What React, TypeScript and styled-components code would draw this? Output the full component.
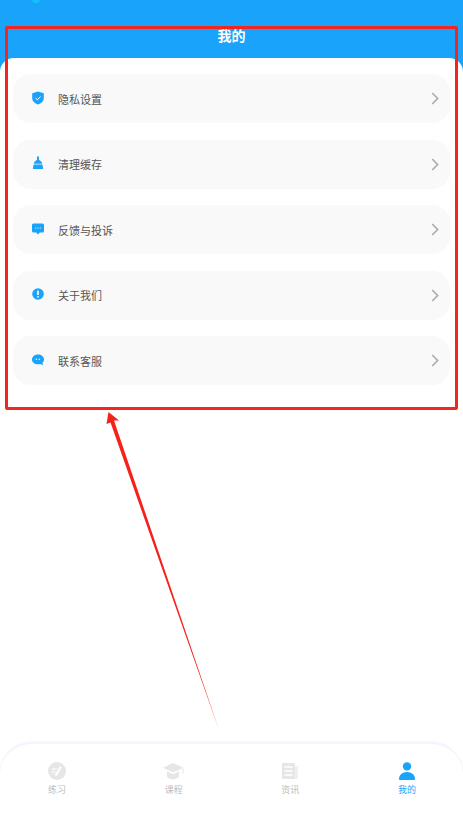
import React from "react";
import styled, { createGlobalStyle } from "styled-components";

const GlobalStyle = createGlobalStyle`
  html, body {
    margin: 0;
    padding: 0;
    background: #fff;
  }
  body {
    font-family: "Noto Sans CJK SC", "Liberation Sans", sans-serif;
  }
`;

const Page = styled.div`
  position: relative;
  width: 463px;
  height: 815px;
  overflow: hidden;
  display: flex;
  flex-direction: column;
  background: linear-gradient(#1aa3fb 0, #1aa3fb 80px, #fff 80px);
`;

const Header = styled.header`
  height: 58px;
  flex-shrink: 0;
  position: relative;
  display: flex;
  justify-content: center;
  padding-top: 25px;
  box-sizing: border-box;
`;

const Title = styled.h1`
  margin: 0;
  font-size: 14px;
  line-height: 20px;
  font-weight: 700;
  color: #fff;
`;

const StatusDot = styled.span`
  position: absolute;
  left: 32px;
  top: -5px;
  width: 8px;
  height: 8px;
  border-radius: 50%;
  background: #12c2ff;
`;

const Content = styled.main`
  flex: 1;
  background: #fff;
  border-radius: 14px 14px 0 0;
  padding: 16px 13px 0 13px;
  display: flex;
  flex-direction: column;
  gap: 16.6px;
`;

const Row = styled.div`
  height: 49px;
  border-radius: 18px;
  background: #f9f9f9;
  display: flex;
  align-items: center;
  padding: 0 11px 0 18px;
`;

const RowIcon = styled.span`
  width: 14px;
  height: 14px;
  display: flex;
  margin-right: 13px;
  color: #1aa3fb;
  transform: translateY(-1px);
`;

const RowLabel = styled.span`
  flex: 1;
  font-size: 11px;
  line-height: 16px;
  color: #555;
  transform: translateY(-0.5px);
`;

const Chevron = styled.svg`
  width: 8px;
  height: 13px;
  fill: none;
  stroke: #adadad;
  stroke-width: 1.7;
`;

const TabBar = styled.nav`
  height: 73px;
  flex-shrink: 0;
  box-sizing: border-box;
  background: #fff;
  border-top: 2px solid #f3f5fd;
  border-radius: 32px 32px 0 0;
  box-shadow: 0 0 0 1px #f7f8fe;
  overflow: hidden;
  padding-top: 18px;
`;

const TabGrid = styled.div`
  display: grid;
  grid-template-columns: repeat(4, 116.7px);
  margin-left: -1.4px;
`;

const Tab = styled.div<{ $active?: boolean }>`
  display: flex;
  flex-direction: column;
  align-items: center;
  gap: 3px;
  color: ${(p) => (p.$active ? "#1aa3fb" : "#bdbdbd")};
`;

const TabIcon = styled.svg<{ $active?: boolean; $wide?: boolean }>`
  width: ${(p) => (p.$wide ? "21px" : "18px")};
  height: 18px;
  color: ${(p) => (p.$active ? "#1aa3fb" : "#e6e6e6")};
`;

const TabLabel = styled.span`
  font-size: 9px;
  line-height: 14px;
`;

const Highlight = styled.div`
  position: absolute;
  left: 5px;
  top: 26px;
  width: 453px;
  height: 384px;
  box-sizing: border-box;
  border: 3px solid #f3261f;
  border-radius: 2px;
  pointer-events: none;
`;

const Arrow = styled.svg`
  position: absolute;
  left: 0;
  top: 0;
  width: 463px;
  height: 815px;
  pointer-events: none;
`;

const ShieldIcon = () => (
  <svg viewBox="0 0 14 14" width="14" height="14">
    <path d="M7 .6 12.8 2.2V7c0 3.2-2.5 5.4-5.8 6.6C3.700 12.400 1.200 10.200 1.200 7V2.200Z" fill="currentColor" />
    <path d="M4.600 7.100 6.400 8.800 9.500 5.500" fill="none" stroke="#fff" strokeWidth="1" />
  </svg>
);

const BroomIcon = () => (
  <svg viewBox="0 0 14 14" width="14" height="14">
    <path d="M6 .5h2v3.300l2.700 2.200.5 1.800H2.800l.5-1.800L6 3.800Z" fill="currentColor" />
    <path d="M2.600 8.600h8.800l.8 4.400H1.800Z" fill="currentColor" />
  </svg>
);

const FeedbackIcon = () => (
  <svg viewBox="0 0 14 14" width="14" height="14">
    <path d="M2.500 1.500h9A1.500 1.500 0 0 1 13 3v6a1.500 1.500 0 0 1-1.500 1.500H8.800L7 12.500 5.200 10.500H2.500A1.500 1.500 0 0 1 1 9V3a1.500 1.500 0 0 1 1.500-1.500Z" fill="currentColor" />
    <circle cx="4.700" cy="6" r=".6" fill="#fff" />
    <circle cx="7" cy="6" r=".6" fill="#fff" />
    <circle cx="9.300" cy="6" r=".6" fill="#fff" />
  </svg>
);

const InfoIcon = () => (
  <svg viewBox="0 0 14 14" width="14" height="14">
    <circle cx="7" cy="7" r="5.800" fill="currentColor" />
    <rect x="6.200" y="3.400" width="1.600" height="4.600" rx=".6" fill="#fff" />
    <circle cx="7" cy="9.800" r=".9" fill="#fff" />
  </svg>
);

const ChatIcon = () => (
  <svg viewBox="0 0 14 14" width="14" height="14">
    <path d="M7 1.500c3.300 0 6 2.100 6 4.900 0 1.300-.6 2.500-1.600 3.400l.7 2.400-3-1.300c-.7.200-1.400.3-2.100.3-3.300 0-6-2.100-6-4.800S3.700 1.500 7 1.500Z" fill="currentColor" />
    <circle cx="5.300" cy="6.300" r=".7" fill="#fff" />
    <circle cx="8.200" cy="6.300" r=".7" fill="#fff" />
  </svg>
);

const items = [
  { label: "隐私设置", icon: <ShieldIcon /> },
  { label: "清理缓存", icon: <BroomIcon /> },
  { label: "反馈与投诉", icon: <FeedbackIcon /> },
  { label: "关于我们", icon: <InfoIcon /> },
  { label: "联系客服", icon: <ChatIcon /> },
];

function App() {
  return (
    <Page>
      <GlobalStyle />
      <Header>
        <StatusDot />
        <Title>我的</Title>
      </Header>
      <Content>
        {items.map((item) => (
          <Row key={item.label}>
            <RowIcon>{item.icon}</RowIcon>
            <RowLabel>{item.label}</RowLabel>
            <Chevron viewBox="0 0 8 13">
              <path d="M1.200 1 6.600 6.500 1.200 12" />
            </Chevron>
          </Row>
        ))}
      </Content>
      <TabBar>
        <TabGrid>
          <Tab>
            <TabIcon viewBox="0 0 18 18">
              <circle cx="9" cy="9" r="9" fill="currentColor" />
              <path d="M8 13 12.500 5.500" stroke="#fff" strokeWidth="2.200" strokeLinecap="round" />
              <path d="M4 7h4.500M4 10h3" stroke="#fff" strokeWidth="1.100" strokeLinecap="round" />
            </TabIcon>
            <TabLabel>练习</TabLabel>
          </Tab>
          <Tab>
            <TabIcon $wide viewBox="0 0 21 18">
              <path d="M10 1 20.500 5.800 10 10.500 0 5.800Z" fill="currentColor" />
              <path d="M4 9.500v4.500c0 1.800 2.700 3.300 6 3.300s6-1.500 6-3.300V9.500l-6 2.800Z" fill="currentColor" />
              <path d="M20 6.500v5" stroke="currentColor" strokeWidth="1" />
            </TabIcon>
            <TabLabel>课程</TabLabel>
          </Tab>
          <Tab>
            <TabIcon viewBox="0 0 18 18">
              <rect x="1" y="1" width="13" height="16" fill="currentColor" />
              <path d="M14 4h3v13h-3Z" fill="currentColor" opacity=".6" />
              <path d="M3.500 5h8M3.500 9h8M3.500 13h8" stroke="#fff" strokeWidth="1.300" />
            </TabIcon>
            <TabLabel>资讯</TabLabel>
          </Tab>
          <Tab $active>
            <TabIcon $active viewBox="0 0 18 18">
              <circle cx="9" cy="4.400" r="4.200" fill="currentColor" />
              <path d="M2 18c-.6 0-1-.4-1-1 0-4 3.400-7 8-7s8 3 8 7c0 .6-.4 1-1 1Z" fill="currentColor" />
            </TabIcon>
            <TabLabel>我的</TabLabel>
          </Tab>
        </TabGrid>
      </TabBar>
      <Highlight />
      <Arrow viewBox="0 0 463 815">
        <path d="M108.500 412 119 420.500 114 420.500 219 730 110.500 422.500 106.500 424Z" fill="#f5221c" />
      </Arrow>
    </Page>
  );
}

export default App;
